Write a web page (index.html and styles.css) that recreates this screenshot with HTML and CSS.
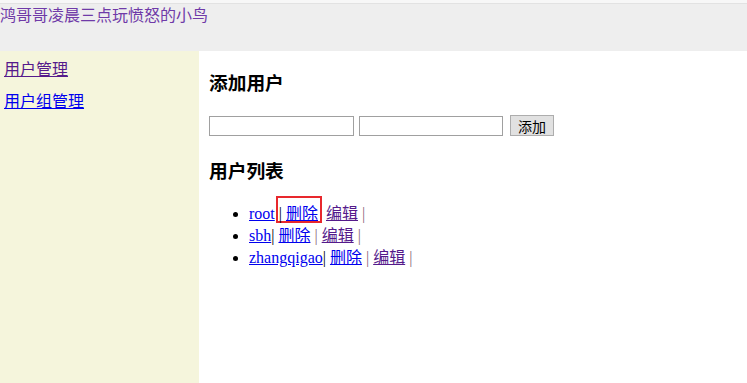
FILE: index.html
```html
<!DOCTYPE html>
<html lang="zh">
<head>
    <meta charset="UTF-8">
    <title>用户管理</title>
    <link rel="stylesheet" href="styles.css">
</head>
<body>
    <div class="header">鸿哥哥凌晨三点玩愤怒的小鸟</div>

    <div class="layout">
        <!-- left menu -->
        <div class="menu">
            <a class="visited" href="#">用户管理</a>
            <a href="#">用户组管理</a>
        </div>

        <!-- content -->
        <div class="content">
            <h3>添加用户</h3>
            <form class="add-form">
                <input type="text">
                <input type="text">
                <button type="button">添加</button>
            </form>

            <h3 class="list-title">用户列表</h3>
            <ul class="user-list">
                <li><a href="#">root</a><span class="mark">| <a href="#">删除</a></span> <a class="visited" href="#">编辑</a> <span class="sep">|</span></li>
                <li><a href="#">sbh</a>| <a href="#">删除</a> <span class="sep">|</span> <a class="visited" href="#">编辑</a> <span class="sep">|</span></li>
                <li><a href="#">zhangqigao</a>| <a href="#">删除</a> <span class="sep">|</span> <a class="visited" href="#">编辑</a> <span class="sep">|</span></li>
            </ul>
        </div>
    </div>
</body>
</html>
```

FILE: styles.css
```css
html, body {
    margin: 0;
    padding: 0;
}

body {
    font-family: "Liberation Serif", "Noto Sans CJK SC", serif;
    font-size: 16px;
    background: #fff;
    border-top: 3px solid #f7f7f7;
}

a {
    color: #0000ee;
}

a.visited {
    color: #551a8b;
}

.header {
    height: 48px;
    background-color: #eeeeee;
    border-top: 1px solid #e2e2e2;
    color: #6f3aa8;
    line-height: 23px;
    box-sizing: border-box;
}

.layout {
    display: grid;
    grid-template-columns: 199px 1fr;
    min-height: 332px;
}

.menu {
    background-color: #f5f5dc;
    padding: 8px 4px;
}

.menu a {
    display: block;
    line-height: 22px;
    margin-bottom: 10px;
}

.content {
    padding: 0 10px;
}

h3 {
    font-size: 18.72px;
    font-weight: bold;
    margin: 20px 0 18px;
    line-height: 26px;
}

.list-title {
    margin-top: 23px;
    margin-bottom: 18px;
}

.add-form {
    display: flex;
    align-items: center;
    gap: 5px;
}

.add-form input {
    width: 145px;
    height: 20px;
    box-sizing: border-box;
    border: 1px solid #a0a0a0;
    padding: 1px 2px;
    margin: 0;
}

.add-form input + input {
    width: 144px;
}

.add-form button {
    margin-left: 2px;
    width: 44px;
    height: 21px;
    padding: 0;
    font-family: "Noto Sans CJK SC", sans-serif;
    font-size: 14px;
    background-color: #e1e1e1;
    border: 1px solid #adadad;
    color: #000;
}

.user-list {
    margin: 0;
    padding-left: 40px;
}

.user-list li {
    height: 22px;
    line-height: 22px;
}

.sep {
    color: #8a6a7a;
}

/* red marker box around the first delete link */
.mark {
    display: inline-block;
    line-height: 15px;
    border: 2px solid #e8282d;
    padding: 8px 2px 0 1px;
    margin: -8px 0 -2px 1px;
}
```
